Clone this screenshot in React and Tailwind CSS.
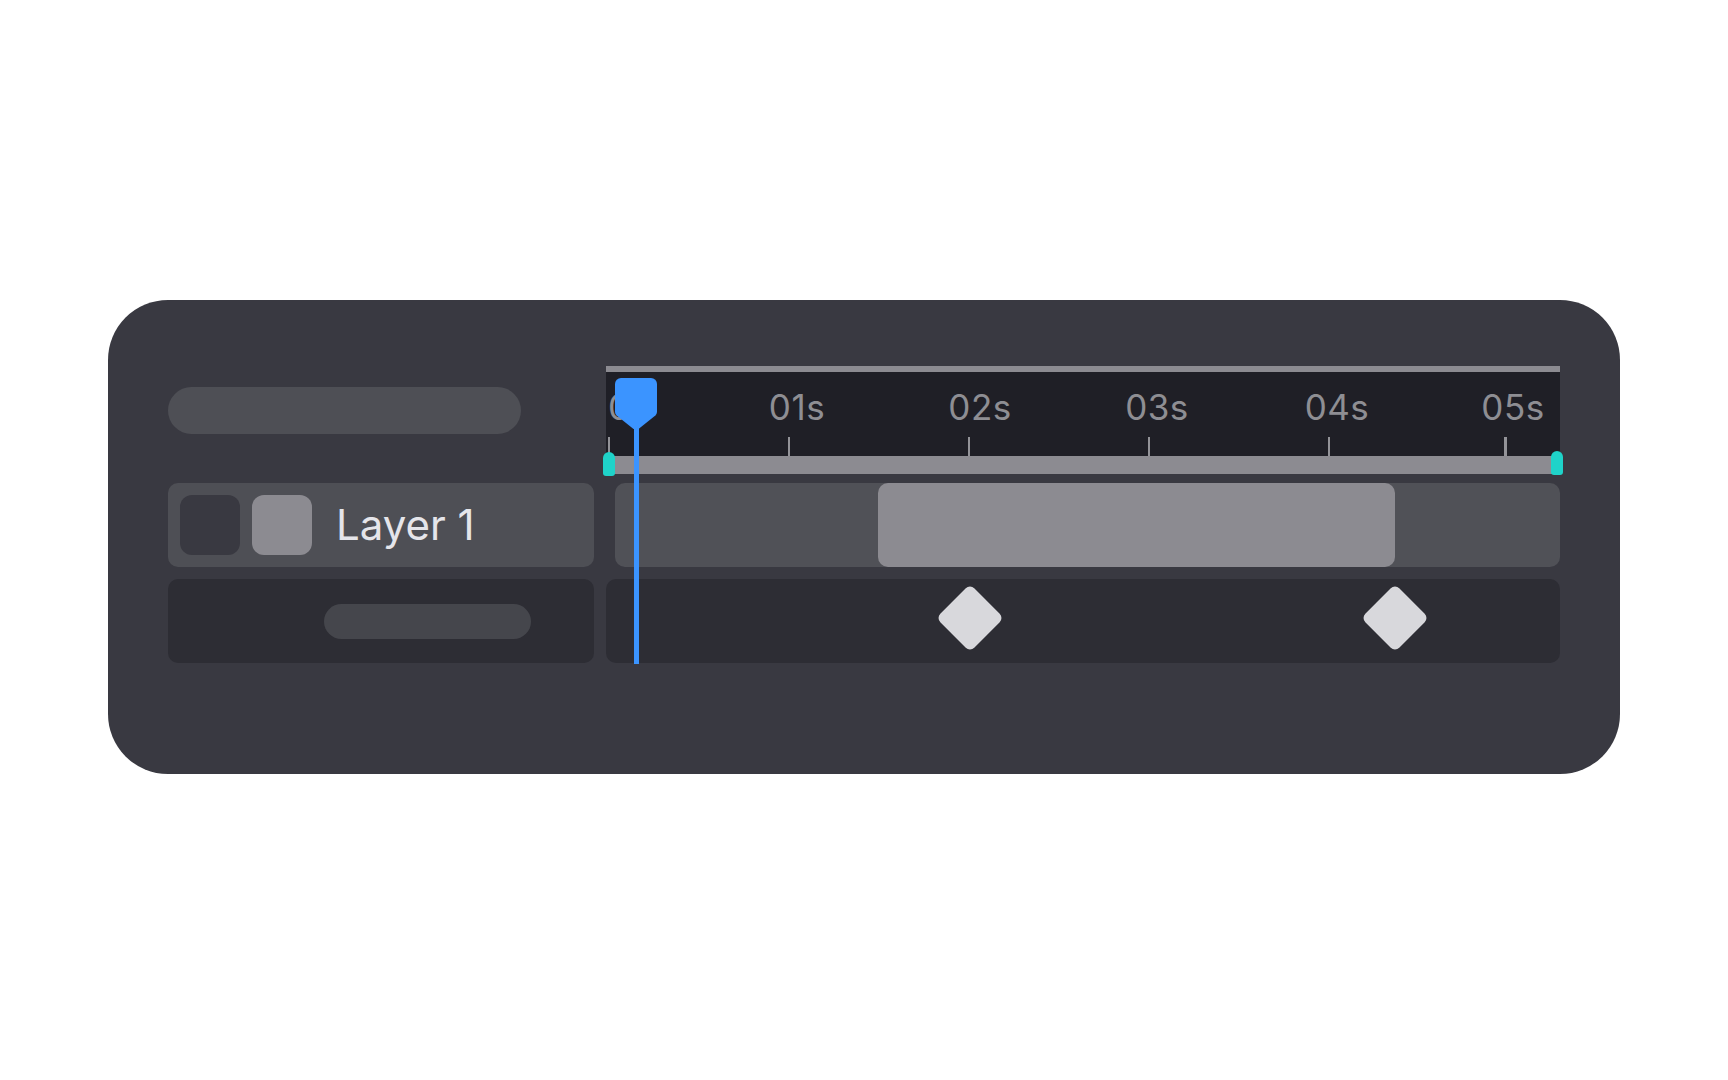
import React from "react";

const TICKS = [3, 183, 363, 543, 723, 899.5];
const LABELS = [
  ["01s", 191],
  ["02s", 374],
  ["03s", 551],
  ["04s", 731],
  ["05s", 907],
];

function Playhead() {
  return (
    <div className="pointer-events-none absolute left-[447px] top-[12px] w-[42px]">
      <svg width="42" height="52" viewBox="0 0 42 52" className="block">
        <path
          d="M6 0 H36 A6 6 0 0 1 42 6 V34 Q42 36 40.4 37.4 L23.5 51 H18.5 L1.6 37.4 Q0 36 0 34 V6 A6 6 0 0 1 6 0 Z"
          fill="#3b94ff"
        />
      </svg>
      <div className="ml-[18.5px] -mt-[2px] h-[236px] w-[5px] bg-[#3b94ff]" />
    </div>
  );
}

function Diamond({ left }) {
  return (
    <div
      className="absolute top-[15px] h-[48px] w-[48px] rotate-45 rounded-[6px] bg-[#d8d8dc]"
      style={{ left }}
    />
  );
}

export default function App() {
  return (
    <div className="min-h-screen bg-white pt-[300px] font-['Inter',sans-serif]">
      <div className="mx-auto h-[474px] w-[1512px] rounded-[60px] bg-[#393941] px-[60px] pt-[66px]">
        <div className="relative grid grid-cols-[426px_954px] gap-x-[12px]">
          {/* Ruler row */}
          <div className="pt-[21px]">
            <div className="h-[47px] w-[353px] rounded-full bg-[#4e4f55]" />
          </div>
          <div className="relative">
            <div className="h-[6px] bg-[#8c8b91]" />
            <div className="relative h-[84px] overflow-hidden bg-[#1f1f26]">
              <span className="absolute left-[2px] top-[18px] text-[35px] leading-none tracking-[0.5px] text-[#8e8e93]">
                0s
              </span>
              {LABELS.map(([l, c]) => (
                <span
                  key={l}
                  className="absolute top-[18px] -translate-x-1/2 text-[35px] leading-none tracking-[0.5px] text-[#8e8e93]"
                  style={{ left: c }}
                >
                  {l}
                </span>
              ))}
              {TICKS.map((t, i) => (
                <div
                  key={i}
                  className="absolute bottom-0 h-[19px] w-[2.5px] bg-[#939398]"
                  style={{ left: t - 1.25 }}
                />
              ))}
            </div>
            <div className="h-[18px] bg-[#8c8b91]" />
            <div className="absolute left-[-3px] top-[86px] h-[24px] w-[12px] rounded-t-[6px] rounded-b-[3px] bg-[#1fd3c9]" />
            <div className="absolute left-[945px] top-[85px] h-[24px] w-[12px] rounded-t-[6px] rounded-b-[3px] bg-[#1fd3c9]" />
          </div>

          {/* Layer row */}
          <div className="mt-[9px] flex h-[84px] items-center gap-[12px] rounded-[10px] bg-[#4e4f55] px-[12px]">
            <div className="h-[60px] w-[60px] rounded-[12px] bg-[#393941]" />
            <div className="h-[60px] w-[60px] rounded-[12px] bg-[#8c8b91]" />
            <span className="ml-[12px] text-[42px] leading-none text-[#e5e5ea]">Layer 1</span>
          </div>
          <div className="mt-[9px] ml-[9px] flex h-[84px] overflow-hidden rounded-[10px] bg-[#505157]">
            <div className="w-[263px]" />
            <div className="w-[517px] rounded-[10px] bg-[#8c8b91]" />
          </div>

          {/* Keyframe row */}
          <div className="mt-[12px] flex h-[84px] items-center justify-end rounded-[10px] bg-[#2d2d34] pr-[63px]">
            <div className="h-[35px] w-[207px] rounded-full bg-[#45464c]" />
          </div>
          <div className="relative mt-[12px] h-[84px] rounded-[10px] bg-[#2d2d34]">
            <Diamond left={340} />
            <Diamond left={765} />
          </div>

          <Playhead />
        </div>
      </div>
    </div>
  );
}
